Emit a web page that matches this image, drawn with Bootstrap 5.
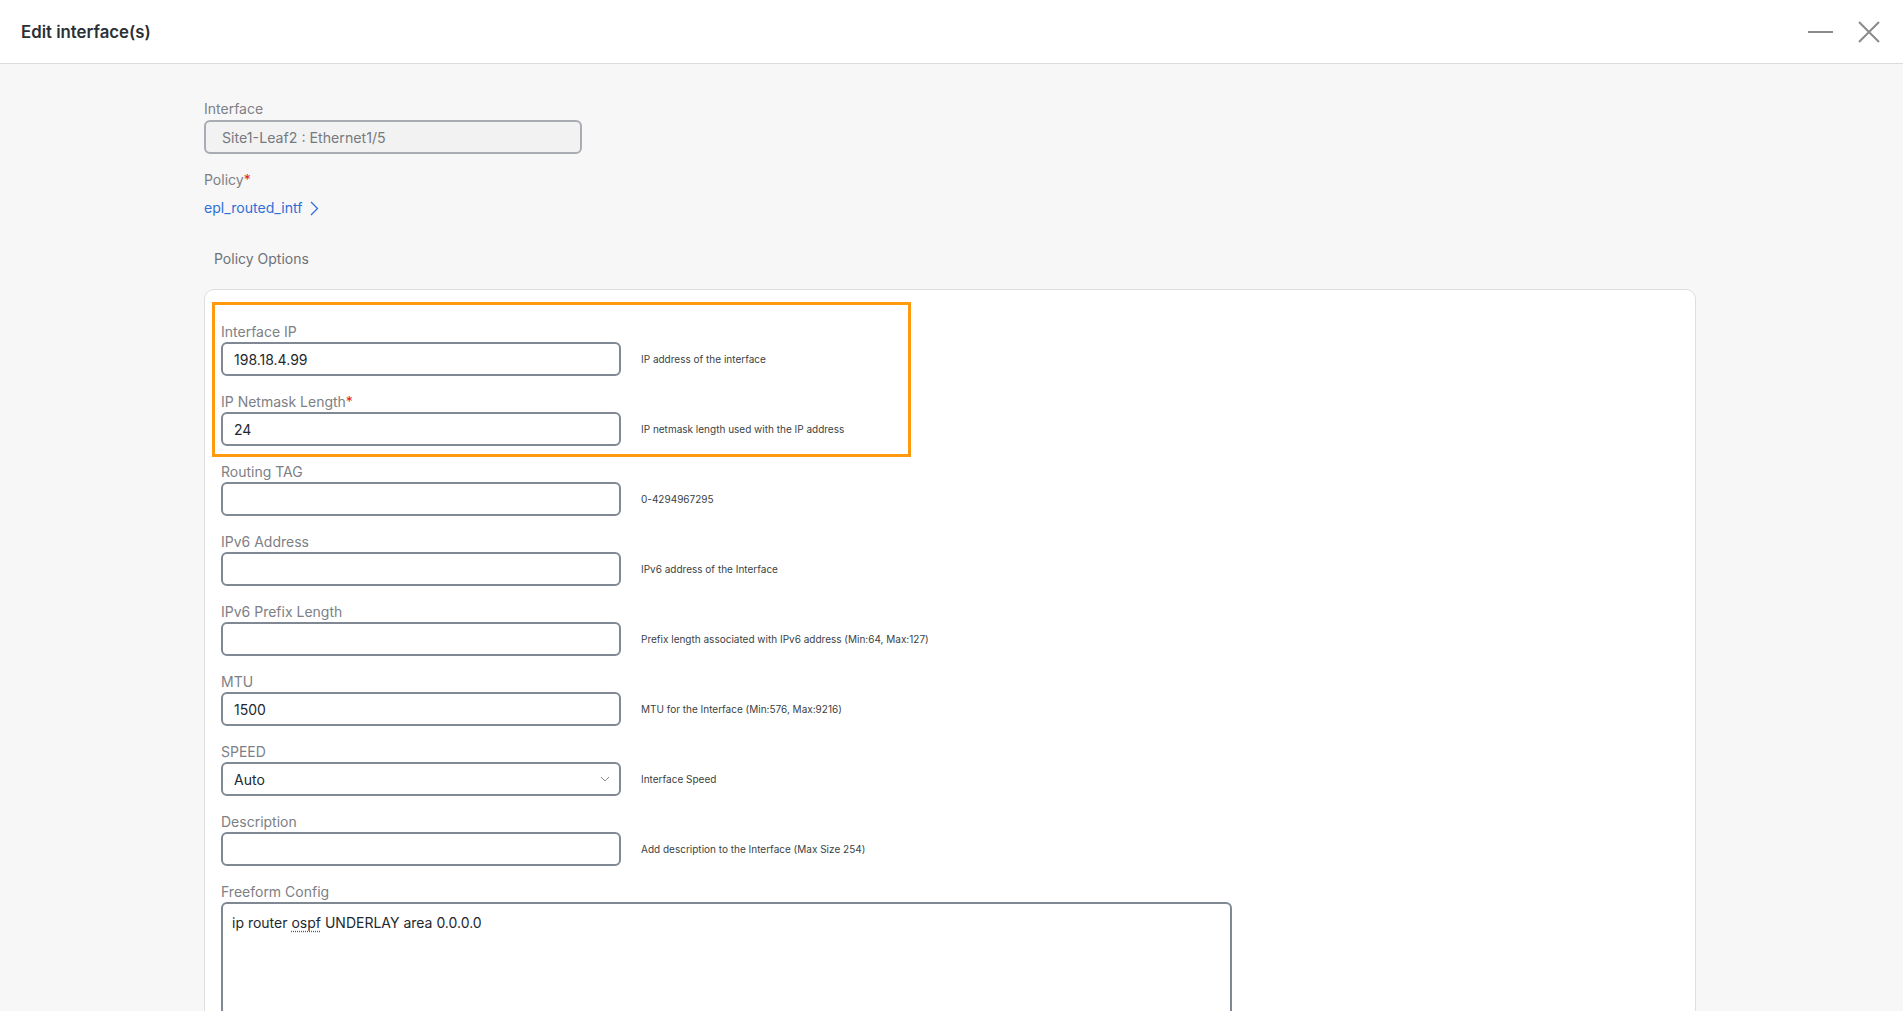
<!DOCTYPE html>
<html lang="en">
<head>
  <meta charset="UTF-8" />
  <title>Edit interface(s)</title>
  <link href="https://cdn.jsdelivr.net/npm/bootstrap@5.3.3/dist/css/bootstrap.min.css" rel="stylesheet" />
  <style>
    html, body { height: 100%; overflow: hidden; }
    body { font-family: Inter, "Liberation Sans", sans-serif; font-size: 14px; background: #f7f7f7; color: #23282e; }
    .top-bar { height: 64px; padding: 0 23px 0 21px; border-bottom: 1px solid #dcdcdc; }
    .top-title { font-size: 16.8px; font-weight: 600; color: #2b3036; padding-top: 2px; }
    .win-btns svg { display: block; }
    .edit-body { padding: 35px 207px 0 204px; }
    .field-label { display: block; color: #7d8085; font-size: 14px; line-height: 20px; margin: 0; }
    .req { color: #e5202e; }
    .static-box.form-control { width: 378px; height: 34px; margin-top: 1px; padding: 1px 16px 0; font-size: 14.2px; color: #777a7e; background: #f2f2f2; border: 2px solid #a9acb2; border-radius: 6px; }
    .policy-link { color: #2f6fd6; text-decoration: none; line-height: 20px; font-size: 14.1px; }
    .opt-title { color: #6e7176; line-height: 20px; padding-left: 10px; margin: 31px 0 20px; }
    .opt-panel { background: #fff; border: 1px solid #dedede; border-radius: 10px 10px 0 0; padding: 12px 7px 0; height: 900px; }
    .orange-box { width: 699px; border: 3px solid #ff9a0e; padding: 17px 6px 8px; margin-bottom: 5px; }
    .rest-rows { padding-left: 9px; }
    .form-row { margin-bottom: 16px; }
    .orange-box .form-row:last-child { margin-bottom: 0; }
    .form-row .form-control, .form-row .form-select { width: 400px; height: 34px; flex: none; padding: 0 11px; font-size: 14px; color: #23282e; background-color: #fff; border: 2px solid #7f8893; border-radius: 6px; box-shadow: none; }
    .form-row .form-select {
      background-image: url("data:image/svg+xml,%3csvg xmlns='http://www.w3.org/2000/svg' viewBox='0 0 10 6'%3e%3cpath fill='none' stroke='%23888' stroke-width='1' d='M1 1l4 4 4-4'/%3e%3c/svg%3e");
      background-size: 10px 6px;
      background-position: right 9px top 12px;
    }
    .input-line { gap: 20px; }
    .hint { font-size: 10px; color: #3a3f45; }
    .free-text.form-control { width: 1011px; height: 400px; padding: 9px 9px; font-size: 14px; line-height: 20px; color: #23282e; border: 2px solid #7f8893; border-radius: 6px; }
    .spell { text-decoration: underline dotted #e5202e; text-underline-offset: 3px; }
  </style>
</head>
<body>

  <!-- Header -->
  <div class="top-bar bg-white d-flex justify-content-between align-items-center">
    <div class="top-title">Edit interface(s)</div>
    <div class="win-btns d-flex align-items-center gap-4">
      <svg width="26" height="22" viewBox="0 0 26 22"><path d="M0 11h25" stroke="#8a8a8a" stroke-width="2" fill="none"/></svg>
      <svg width="22" height="22" viewBox="0 0 22 22"><path d="M1 1l20 20M21 1L1 21" stroke="#8a8a8a" stroke-width="2" fill="none"/></svg>
    </div>
  </div>

  <div class="edit-body">
    <label class="field-label">Interface</label>
    <input class="form-control static-box" value="Site1-Leaf2 : Ethernet1/5" readonly />

    <label class="field-label mt-3">Policy<span class="req">*</span></label>
    <div class="mt-2 d-flex align-items-center gap-2">
      <a class="policy-link" href="#">epl_routed_intf</a>
      <svg width="9" height="15" viewBox="0 0 9 15"><path d="M1 1l6.5 6.5L1 14" stroke="#2f6fd6" stroke-width="1.3" fill="none"/></svg>
    </div>

    <div class="opt-title">Policy Options</div>

    <div class="opt-panel">
      <div class="orange-box">
        <div class="form-row">
          <label class="field-label">Interface IP</label>
          <div class="d-flex align-items-center input-line">
            <input class="form-control" value="198.18.4.99" />
            <span class="hint">IP address of the interface</span>
          </div>
        </div>
        <div class="form-row">
          <label class="field-label">IP Netmask Length<span class="req">*</span></label>
          <div class="d-flex align-items-center input-line">
            <input class="form-control" value="24" />
            <span class="hint">IP netmask length used with the IP address</span>
          </div>
        </div>
      </div>

      <div class="rest-rows">
        <div class="form-row">
          <label class="field-label">Routing TAG</label>
          <div class="d-flex align-items-center input-line">
            <input class="form-control" />
            <span class="hint">0-4294967295</span>
          </div>
        </div>
        <div class="form-row">
          <label class="field-label">IPv6 Address</label>
          <div class="d-flex align-items-center input-line">
            <input class="form-control" />
            <span class="hint">IPv6 address of the Interface</span>
          </div>
        </div>
        <div class="form-row">
          <label class="field-label">IPv6 Prefix Length</label>
          <div class="d-flex align-items-center input-line">
            <input class="form-control" />
            <span class="hint">Prefix length associated with IPv6 address (Min:64, Max:127)</span>
          </div>
        </div>
        <div class="form-row">
          <label class="field-label">MTU</label>
          <div class="d-flex align-items-center input-line">
            <input class="form-control" value="1500" />
            <span class="hint">MTU for the Interface (Min:576, Max:9216)</span>
          </div>
        </div>
        <div class="form-row">
          <label class="field-label">SPEED</label>
          <div class="d-flex align-items-center input-line">
            <select class="form-select"><option>Auto</option></select>
            <span class="hint">Interface Speed</span>
          </div>
        </div>
        <div class="form-row">
          <label class="field-label">Description</label>
          <div class="d-flex align-items-center input-line">
            <input class="form-control" />
            <span class="hint">Add description to the Interface (Max Size 254)</span>
          </div>
        </div>
        <div>
          <label class="field-label">Freeform Config</label>
          <div class="form-control free-text">ip router <span class="spell">ospf</span> UNDERLAY area 0.0.0.0</div>
        </div>
      </div>
    </div>
  </div>

  <script src="https://cdn.jsdelivr.net/npm/bootstrap@5.3.3/dist/js/bootstrap.bundle.min.js"></script>
</body>
</html>
